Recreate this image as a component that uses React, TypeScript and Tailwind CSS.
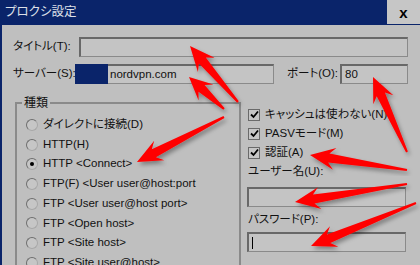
import React from 'react';

type Pt = [number, number];

// tapered annotation arrow: thin tail, wide swept-back head
function arrowPoints(tail: Pt, tip: Pt, headLen = 25, headHalf = 11, neckHalf = 4.5, tailHalf = 1) {
  const dx = tip[0] - tail[0];
  const dy = tip[1] - tail[1];
  const len = Math.hypot(dx, dy);
  const ux = dx / len;
  const uy = dy / len;
  const nx = -uy;
  const ny = ux;
  const bx = tip[0] - ux * headLen;
  const by = tip[1] - uy * headLen;
  const kx = bx + ux * 6;
  const ky = by + uy * 6;
  const pts: Pt[] = [
    tip,
    [bx + nx * headHalf, by + ny * headHalf],
    [kx + nx * neckHalf, ky + ny * neckHalf],
    [tail[0] + nx * tailHalf, tail[1] + ny * tailHalf],
    [tail[0] - nx * tailHalf, tail[1] - ny * tailHalf],
    [kx - nx * neckHalf, ky - ny * neckHalf],
    [bx - nx * headHalf, by - ny * headHalf],
  ];
  return pts.map((p) => p.map((v) => v.toFixed(1)).join(',')).join(' ');
}

const arrows: { tail: Pt; tip: Pt; head?: number }[] = [
  { tail: [238, 102], tip: [190, 46] },
  { tail: [224, 109], tip: [189, 77], head: 23 },
  { tail: [224, 117], tip: [137, 162] },
  { tail: [407, 152], tip: [373, 77] },
  { tail: [407, 170], tip: [310, 155] },
  { tail: [407, 184], tip: [295, 202] },
  { tail: [416, 203], tip: [311, 246] },
];

const radios = [
  'ダイレクトに接続(D)',
  'HTTP(H)',
  'HTTP <Connect>',
  'FTP(F) <User user@host:port',
  'FTP <User user@host port>',
  'FTP <Open host>',
  'FTP <Site host>',
  'FTP <Site user@host>',
];

const checks = ['キャッシュは使わない(N)', 'PASVモード(M)', '認証(A)'];

const field =
  'h-[20px] border-t-2 border-l-2 border-b border-r border-t-[#686868] border-l-[#686868] border-b-[#8a8a8a] border-r-[#8a8a8a] bg-[#c4c4c4] flex items-center';

function Radio({ checked }: { checked?: boolean }) {
  return (
    <div className="w-[12px] h-[12px] shrink-0 rounded-full border border-t-[#6e6e6e] border-l-[#6e6e6e] border-b-[#a8a8a8] border-r-[#a8a8a8] bg-[#c6c6c6] flex items-center justify-center">
      {checked && <div className="w-[4px] h-[4px] rounded-full bg-black" />}
    </div>
  );
}

function Check() {
  return (
    <div className="w-[12px] h-[12px] shrink-0 border border-[#6a6a6a] bg-[#c6c6c6] flex items-center justify-center">
      <svg width="9" height="9" viewBox="0 0 9 9">
        <path d="M1 4.5 L3.5 7 L8 1.5" fill="none" stroke="#000" strokeWidth="1.8" />
      </svg>
    </div>
  );
}

export default function App() {
  return (
    <div className="relative w-[420px] h-[265px] overflow-hidden flex flex-col bg-[#bfbfbf] text-[#111] text-[11.5px] leading-none font-['Liberation_Sans','Noto_Sans_CJK_JP',sans-serif] [font-feature-settings:'palt']">
      {/* title bar */}
      <div className="h-[25px] flex bg-[#0a246a] shrink-0">
        <div className="flex-1 pl-[5px] flex items-center text-[12.5px] text-[#dde0e8]">プロクシ設定</div>
        <div className="w-[33px] h-[24px] bg-[#c6c6c6] flex items-center justify-center text-[15px] font-bold text-black">x</div>
      </div>

      <div className="flex-1 border-l-2 border-[#0a246a]">
        {/* title */}
        <div className="mt-[12px] flex items-center h-[20px]">
          <div className="w-[77px] shrink-0 pl-[11px] whitespace-nowrap">タイトル(T):</div>
          <div className={`${field} w-[329px]`} />
        </div>

        {/* server / port */}
        <div className="mt-[7px] flex items-center h-[20px]">
          <div className="w-[73px] shrink-0 pl-[11px] whitespace-nowrap">サーバー(S):</div>
          <div className="w-[33px] h-[20px] shrink-0 bg-[#0a246a]" />
          <div className="w-[166px] h-[20px] shrink-0 border-t-2 border-b border-r border-t-[#686868] border-b-[#8a8a8a] border-r-[#8a8a8a] bg-[#c4c4c4] flex items-center pl-[2px]">
            nordvpn.com
          </div>
          <div className="ml-[13px] w-[53px] shrink-0 whitespace-nowrap">ポート(O):</div>
          <div className={`${field} w-[68px] pl-[3px]`}>80</div>
        </div>

        <div className="mt-[11px] flex">
          {/* proxy type group */}
          <fieldset className="ml-[13px] w-[226px] h-[200px] shrink-0 border-2 border-[#8a8a8a]">
            <legend className="ml-[5px] px-[2px] text-[12px] leading-[16px]">種類</legend>
            <div className="pt-[4px] pl-[9px] flex flex-col">
              {radios.map((r, i) => (
                <div key={r} className="h-[19.7px] flex items-center gap-[5px] whitespace-nowrap">
                  <Radio checked={i === 2} />
                  <span>{r}</span>
                </div>
              ))}
            </div>
          </fieldset>

          {/* options */}
          <div className="pl-[7px] pt-[10px] flex flex-col">
            {checks.map((c) => (
              <div key={c} className="h-[19px] flex items-center gap-[5px] whitespace-nowrap">
                <Check />
                <span>{c}</span>
              </div>
            ))}
            <div className="h-[19px] flex items-center whitespace-nowrap">ユーザー名(U):</div>
            <div className={`${field} mt-[6px] -ml-[1px] w-[159px]`} />
            <div className="mt-[3px] h-[19px] flex items-center whitespace-nowrap">パスワード(P):</div>
            <div className={`${field} mt-[3px] -ml-[1px] w-[159px] pl-[3px]`}>
              <div className="w-[1px] h-[12px] bg-black" />
            </div>
          </div>
        </div>
      </div>

      {/* red annotation arrows */}
      <svg className="absolute inset-0 pointer-events-none" width="420" height="265" viewBox="0 0 420 265">
        <defs>
          <filter id="shadow" x="-20%" y="-20%" width="140%" height="140%">
            <feDropShadow dx="2" dy="3" stdDeviation="2" floodColor="#000" floodOpacity="0.35" />
          </filter>
        </defs>
        {arrows.map((a, i) => (
          <polygon key={i} points={arrowPoints(a.tail, a.tip, a.head ?? 25)} fill="#ff0000" filter="url(#shadow)" />
        ))}
      </svg>
    </div>
  );
}
